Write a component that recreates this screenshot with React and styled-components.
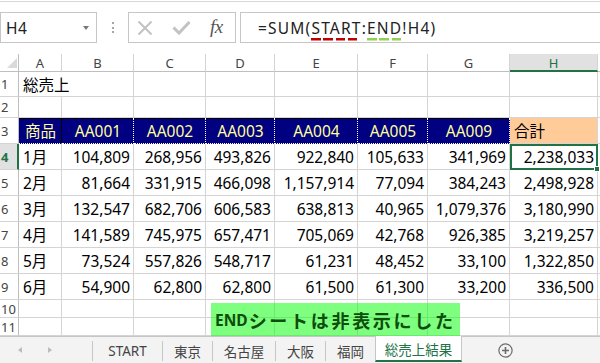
import React from 'react';
import styled, { createGlobalStyle, css } from 'styled-components';

const GREEN = '#217346';
const GRID = '#d4d4d4';
const HEADLINE = '#bfbfbf';

const GlobalStyle = createGlobalStyle`
  html, body { margin: 0; padding: 0; background: #fff; }
  body { font-family: "Noto Sans", "Noto Sans CJK JP", sans-serif; overflow: hidden; }
  *, *::before, *::after { box-sizing: border-box; }
`;

const Window = styled.div`
  width: 600px;
  height: 363px;
  display: flex;
  flex-direction: column;
  overflow: hidden;
  background: #fff;
`;

/* ---------- formula bar ---------- */
const FormulaBar = styled.div`
  display: flex;
  align-items: stretch;
  height: 42px;
  margin-top: 1px;
  margin-bottom: 11px;
  padding-top: 10px;
  border-top: 1px solid #d8d8d8;
  flex: none;
`;

const NameBox = styled.div`
  width: 97px;
  border: 1px solid #c6c6c6;
  display: flex;
  align-items: center;
  justify-content: space-between;
  padding: 0 7px 0 5px;
  font-size: 15.5px;
  letter-spacing: 0.5px;
  color: #222;
`;

const Caret = styled.span`
  width: 0;
  height: 0;
  border-left: 3.5px solid transparent;
  border-right: 3.5px solid transparent;
  border-top: 4px solid #777;
  margin-top: 1px;
`;

const Grip = styled.div`
  width: 31px;
  display: flex;
  flex-direction: column;
  align-items: center;
  justify-content: center;
  gap: 2.5px;
`;

const GripDot = styled.span`
  width: 2px;
  height: 2px;
  background: #a6a6a6;
`;

const FxBox = styled.div`
  width: 108px;
  border: 1px solid #c6c6c6;
  display: flex;
  align-items: center;
  padding-left: 8px;
  gap: 19px;
`;

const Fx = styled.span`
  font-family: "Liberation Serif", serif;
  font-style: italic;
  font-size: 19px;
  color: #555;
  line-height: 1;
  margin-top: -2px;
  letter-spacing: -0.5px;
`;

const FormulaBox = styled.div`
  flex: 1;
  margin-left: 4px;
  margin-right: -2px;
  border: 1px solid #c6c6c6;
  display: flex;
  align-items: center;
  padding-left: 17px;
  font-size: 15.5px;
  letter-spacing: 1.2px;
  color: #222;
  white-space: nowrap;
`;

const Ref = styled.span`
  display: inline-block;
  line-height: 20px;
  padding-bottom: 3px;
  margin-bottom: -3px;
  background-image: repeating-linear-gradient(
    90deg,
    ${p => p.$color} 0 9.5px,
    transparent 9.5px 12.3px
  );
  background-size: ${p => p.$run}px 2.5px;
  background-position: left bottom;
  background-repeat: no-repeat;
`;

/* ---------- sheet ---------- */
const Sheet = styled.div`
  position: relative;
  flex: none;
  display: grid;
  grid-template-columns: 19px 43px 72px 72px 69px 83px 70px 82px 88px 2px;
  grid-template-rows: 18px 25px 21px 26px repeat(6, 26px) 18px 18px;
`;

const Corner = styled.div`
  display: flex;
  align-items: flex-end;
  justify-content: flex-end;
  padding: 0 1px 3px 0;
  border-right: 1px solid ${HEADLINE};
  border-bottom: 1px solid ${HEADLINE};
`;

const ColHead = styled.div`
  display: flex;
  align-items: center;
  justify-content: center;
  font-size: 13px;
  color: #444;
  border-right: ${p => (p.$last ? 'none' : `1px solid ${GRID}`)};
  border-bottom: 1px solid ${HEADLINE};
  ${p =>
    p.$sel &&
    css`
      background: #e1e1e1;
      color: ${GREEN};
      border-bottom: 2px solid ${GREEN};
      padding-top: 1px;
    `}
`;

const RowHead = styled.div`
  display: flex;
  align-items: center;
  padding-left: 1px;
  font-size: 13px;
  color: #444;
  border-right: 1px solid ${HEADLINE};
  border-bottom: 1px solid ${GRID};
  ${p =>
    p.$sel &&
    css`
      background: #e1e1e1;
      color: ${GREEN};
      font-weight: 700;
      border-right: 2px solid ${GREEN};
    `}
`;

const Cell = styled.div`
  position: relative;
  display: flex;
  align-items: center;
  min-width: 0;
  white-space: nowrap;
  font-size: 15.5px;
  color: #000;
  padding: 0 3px 0 4px;
  justify-content: ${p =>
    p.$align === 'right' ? 'flex-end' : p.$align === 'center' ? 'center' : 'flex-start'};
  border-right: ${p => (p.$last || p.$spill ? 'none' : `1px solid ${GRID}`)};
  border-bottom: 1px solid ${GRID};
  ${p =>
    p.$fill === 'navy' &&
    css`
      background: #000080;
      color: #ffff99;
      border-right: 1px dotted #ffffff;
      border-bottom: 1px dotted #ffffff;
      box-shadow: inset 0 1px 0 #000;
    `}
  ${p =>
    p.$fill === 'navy' &&
    p.$edge &&
    css`
      border-right: 1px solid #000;
    `}
  ${p =>
    p.$fill === 'peach' &&
    css`
      background: #ffcc99;
      border-right: 1px solid ${GRID};
    `}
  ${p =>
    p.$sel &&
    css`
      border: 2px solid ${GREEN};
      padding: 0 2px;
    `}
`;

const Handle = styled.span`
  position: absolute;
  right: -4px;
  bottom: -4px;
  width: 6px;
  height: 6px;
  background: ${GREEN};
  border: 1px solid #fff;
  z-index: 2;
`;

const Note = styled.div`
  position: absolute;
  left: 211px;
  top: 249px;
  width: 249px;
  height: 33px;
  background: rgba(0, 255, 0, 0.5);
  display: flex;
  align-items: center;
  padding-left: 4px;
  color: #0d4d0d;
  font-weight: 700;
  white-space: nowrap;
  z-index: 3;
`;

const NoteLatin = styled.span`
  font-size: 15.5px;
  margin-right: 1px;
`;

const NoteKana = styled.span`
  font-size: 18px;
  letter-spacing: 2.7px;
`;

/* ---------- tab bar ---------- */
const TabBar = styled.div`
  flex: 1;
  display: flex;
  align-items: flex-start;
  background: #f3f3f3;
  border-top: 1px solid #c6c6c6;
`;

const Nav = styled.div`
  width: 92px;
  height: 26px;
  display: flex;
  align-items: center;
  padding-left: 18px;
  gap: 26px;
`;

const Arrow = styled.span`
  width: 0;
  height: 0;
  border-top: 3px solid transparent;
  border-bottom: 3px solid transparent;
  ${p =>
    p.$dir === 'left'
      ? css`border-right: 4px solid #bcbcbc;`
      : css`border-left: 4px solid #bcbcbc;`}
`;

const Tab = styled.div`
  width: ${p => p.$w}px;
  display: flex;
  align-items: center;
  justify-content: center;
  font-size: 13.5px;
  color: #444;
  white-space: nowrap;
  height: 20px;
  margin-top: 4px;
  border-left: 1px solid #c6c6c6;
  ${p =>
    p.$active &&
    css`
      height: 26px;
      margin-top: -1px;
      padding-top: 1px;
      background: #fff;
      color: ${GREEN};
      border-right: 1px solid #c6c6c6;
      border-bottom: 2px solid ${GREEN};
    `}
`;

const AddSheet = styled.div`
  margin-left: 36px;
  margin-top: 6px;
  display: flex;
`;

/* ---------- data ---------- */
const COLS = ['A', 'B', 'C', 'D', 'E', 'F', 'G', 'H'];

const DATA = [
  ['1月', '104,809', '268,956', '493,826', '922,840', '105,633', '341,969', '2,238,033'],
  ['2月', '81,664', '331,915', '466,098', '1,157,914', '77,094', '384,243', '2,498,928'],
  ['3月', '132,547', '682,706', '606,583', '638,813', '40,965', '1,079,376', '3,180,990'],
  ['4月', '141,589', '745,975', '657,471', '705,069', '42,768', '926,385', '3,219,257'],
  ['5月', '73,524', '557,826', '548,717', '61,231', '48,452', '33,100', '1,322,850'],
  ['6月', '54,900', '62,800', '62,800', '61,500', '61,300', '33,200', '336,500'],
];

const HEAD = ['商品', 'AA001', 'AA002', 'AA003', 'AA004', 'AA005', 'AA009'];

const TABS = [
  { label: 'START', w: 70 },
  { label: '東京', w: 50 },
  { label: '名古屋', w: 63 },
  { label: '大阪', w: 50 },
  { label: '福岡', w: 50 },
  { label: '総売上結果', w: 87, active: true },
];

const XIcon = () => (
  <svg width="16" height="16" viewBox="0 0 16 16">
    <path d="M1.5 1.5 L14.5 14.5 M14.5 1.5 L1.5 14.5" stroke="#c2c2c2" strokeWidth="2" fill="none" />
  </svg>
);

const CheckIcon = () => (
  <svg width="19" height="15" viewBox="0 0 19 15">
    <path d="M1.5 7.5 L7 13 L17.5 2" stroke="#c2c2c2" strokeWidth="3" fill="none" />
  </svg>
);

const CornerMark = () => (
  <svg width="10" height="10" viewBox="0 0 10 10">
    <polygon points="10,0 10,10 0,10" fill="#dadada" />
  </svg>
);

const PlusCircle = () => (
  <svg width="15" height="15" viewBox="0 0 15 15">
    <circle cx="7.5" cy="7.5" r="6.6" stroke="#6b6b6b" strokeWidth="1.2" fill="none" />
    <path d="M7.5 4 V11 M4 7.5 H11" stroke="#6b6b6b" strokeWidth="1.6" />
  </svg>
);

const EmptyRow = ({ n }) => (
  <>
    <RowHead>{n}</RowHead>
    {COLS.map(c => (
      <Cell key={c} />
    ))}
    <Cell $last />
  </>
);

export default function App() {
  return (
    <>
      <GlobalStyle />
      <Window>
        <FormulaBar>
          <NameBox>
            H4
            <Caret />
          </NameBox>
          <Grip>
            <GripDot />
            <GripDot />
            <GripDot />
          </Grip>
          <FxBox>
            <XIcon />
            <CheckIcon />
            <Fx>fx</Fx>
          </FxBox>
          <FormulaBox>
            <span>
              =SUM(<Ref $color="#c00000" $run={46}>START</Ref>:<Ref $color="#92d050" $run={34}>END</Ref>!H4)
            </span>
          </FormulaBox>
        </FormulaBar>

        <Sheet>
          <Corner>
            <CornerMark />
          </Corner>
          {COLS.map(c => (
            <ColHead key={c} $sel={c === 'H'}>
              {c}
            </ColHead>
          ))}
          <ColHead $last />

          {/* row 1 */}
          <RowHead>1</RowHead>
          <Cell $spill>総売上</Cell>
          {COLS.slice(1).map(c => (
            <Cell key={c} />
          ))}
          <Cell $last />

          {/* row 2 */}
          <EmptyRow n={2} />

          {/* row 3 */}
          <RowHead>3</RowHead>
          {HEAD.map((h, i) => (
            <Cell key={h} $fill="navy" $align="center" $edge={i === 0}>
              {h}
            </Cell>
          ))}
          <Cell $fill="peach">合計</Cell>
          <Cell $last />

          {/* rows 4-9 */}
          {DATA.map((row, r) => (
            <React.Fragment key={r}>
              <RowHead $sel={r === 0}>{r + 4}</RowHead>
              {row.map((v, i) => (
                <Cell key={i} $align={i === 0 ? 'left' : 'right'} $sel={r === 0 && i === 7}>
                  {v}
                  {r === 0 && i === 7 && <Handle />}
                </Cell>
              ))}
              <Cell $last />
            </React.Fragment>
          ))}

          <EmptyRow n={10} />
          <EmptyRow n={11} />

          <Note>
            <NoteLatin>END</NoteLatin>
            <NoteKana>シートは非表示にした</NoteKana>
          </Note>
        </Sheet>

        <TabBar>
          <Nav>
            <Arrow $dir="left" />
            <Arrow $dir="right" />
          </Nav>
          {TABS.map(t => (
            <Tab key={t.label} $w={t.w} $active={t.active}>
              {t.label}
            </Tab>
          ))}
          <AddSheet>
            <PlusCircle />
          </AddSheet>
        </TabBar>
      </Window>
    </>
  );
}
